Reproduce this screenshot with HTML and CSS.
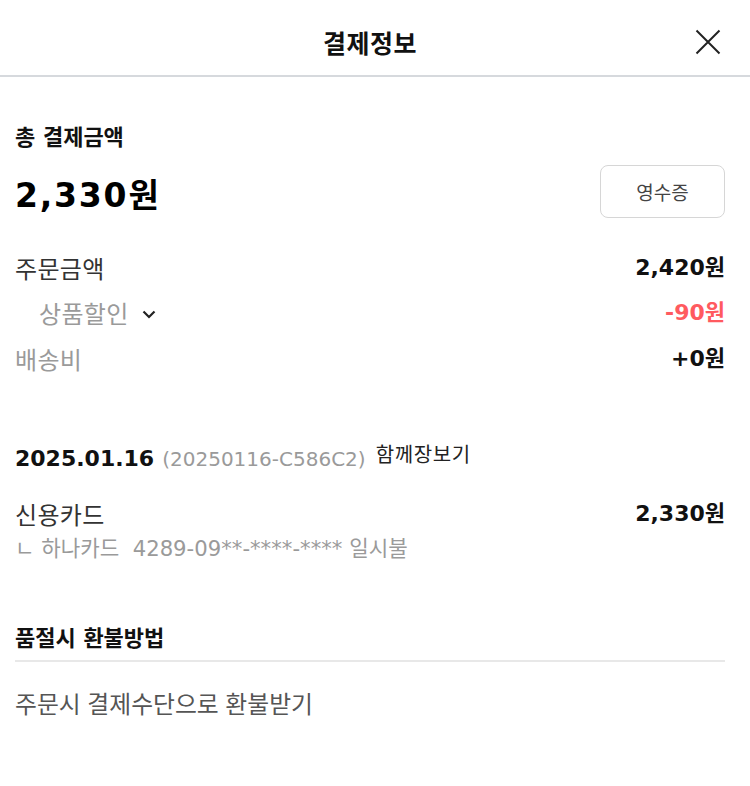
FILE: index.html
```html
<!DOCTYPE html>
<html lang="ko">
<head>
<meta charset="utf-8">
<link rel="stylesheet" href="styles.css">
</head>
<body>
<div class="page">
  <header class="header">
    <h1 class="title">결제정보</h1>
    <button class="close" aria-label="닫기">
      <svg width="26" height="26" viewBox="0 0 26 26"><path d="M1.5 1.5 L24.5 24.5 M24.5 1.5 L1.5 24.5" stroke="#222" stroke-width="2" fill="none"/></svg>
    </button>
  </header>

  <section class="total">
    <div class="label-strong">총 결제금액</div>
    <div class="total-row">
      <div class="total-amount">2,330원</div>
      <button class="receipt">영수증</button>
    </div>
  </section>

  <section class="breakdown">
    <div class="row">
      <span class="name dark">주문금액</span>
      <span class="val">2,420원</span>
    </div>
    <div class="row">
      <span class="name gray sub">상품할인<svg class="chev" width="14" height="9" viewBox="0 0 14 9"><path d="M1.5 1.5 L7 7 L12.5 1.5" stroke="#222" stroke-width="2.2" fill="none"/></svg></span>
      <span class="val red">-90원</span>
    </div>
    <div class="row">
      <span class="name gray">배송비</span>
      <span class="val">+0원</span>
    </div>
  </section>

  <section class="order">
    <div class="order-head">
      <span class="date">2025.01.16</span>
      <span class="order-no">(20250116-C586C2)</span>
      <span class="tag">함께장보기</span>
    </div>
    <div class="row pay-row">
      <span class="name dark">신용카드</span>
      <span class="val">2,330원</span>
    </div>
    <div class="card-info">ㄴ 하나카드&nbsp; 4289-09**-****-**** 일시불</div>
  </section>

  <section class="refund">
    <div class="label-strong refund-title">품절시 환불방법</div>
    <div class="refund-text">주문시 결제수단으로 환불받기</div>
  </section>
</div>
</body>
</html>
```
FILE: styles.css
```css
* { box-sizing: border-box; }
html, body { margin: 0; padding: 0; background: #fff; }
body {
  font-family: "DejaVu Sans", "Noto Sans CJK KR", sans-serif;
  color: #111;
  width: 750px;
}
.page { width: 750px; }
.header {
  height: 77px;
  border-bottom: 2px solid #d6d9dd;
  display: flex;
  align-items: center;
  justify-content: center;
  position: relative;
  padding-top: 9px;
  padding-right: 10px;
}
.title {
  margin: 0;
  font-family: "Noto Sans CJK KR", sans-serif;
  font-size: 25px;
  font-weight: 700;
  line-height: 30px;
  letter-spacing: 0.5px;
  color: #111;
}
.close {
  position: absolute;
  right: 29px;
  top: 29px;
  width: 26px;
  height: 26px;
  padding: 0;
  border: 0;
  background: none;
  display: flex;
}
.total { padding: 48px 25px 0 15px; }
.label-strong {
  font-size: 22px;
  font-weight: 700;
  line-height: 26px;
  color: #111;
}
.total-row {
  display: flex;
  justify-content: space-between;
  align-items: flex-start;
  margin-top: 14px;
  height: 53px;
}
.total-amount {
  font-size: 33px;
  font-weight: 700;
  line-height: 53px;
  padding-top: 4px;
  letter-spacing: 1.8px;
  color: #000;
}
.receipt {
  width: 125px;
  height: 53px;
  border: 1px solid #d6d6d6;
  border-radius: 8px;
  background: #fff;
  font-family: "Noto Sans CJK KR", sans-serif;
  font-size: 19px;
  color: #444;
  padding: 0;
}
.breakdown { padding: 27px 25px 0 15px; }
.row {
  display: flex;
  justify-content: space-between;
  align-items: center;
  height: 45.5px;
}
.name {
  font-family: "Noto Sans CJK KR", sans-serif;
  font-size: 24px;
  line-height: 30px;
  display: flex;
  align-items: center;
  letter-spacing: 0.3px;
}
.dark { color: #333; }
.gray { color: #9a9a9a; }
.sub { padding-left: 24px; }
.chev { margin-left: 13px; margin-top: 2px; }
.val { font-size: 22px; font-weight: 700; color: #111; line-height: 30px; }
.red { color: #ff5a5f; }
.order { padding: 60px 25px 0 15px; }
.order-head {
  display: flex;
  align-items: baseline;
  height: 32px;
  line-height: 32px;
}
.date { font-size: 22px; font-weight: 700; color: #111; }
.order-no { font-size: 20px; color: #9a9a9a; margin-left: 8px; }
.tag {
  font-family: "Noto Sans CJK KR", sans-serif;
  font-size: 20px;
  letter-spacing: 0.6px;
  color: #222;
  margin-left: 10px;
  position: relative;
  top: -4px;
}
.pay-row { margin-top: 22px; height: 36px; }
.card-info {
  font-size: 21.2px;
  color: #9a9a9a;
  line-height: 30px;
  margin-top: 2px;
}
.refund { padding: 62px 25px 0 15px; }
.refund-title {
  padding-bottom: 8px;
  border-bottom: 2px solid #e8e8e8;
}
.refund-text {
  font-family: "Noto Sans CJK KR", sans-serif;
  font-size: 23.8px;
  color: #555;
  margin-top: 26px;
  line-height: 30px;
}
```
